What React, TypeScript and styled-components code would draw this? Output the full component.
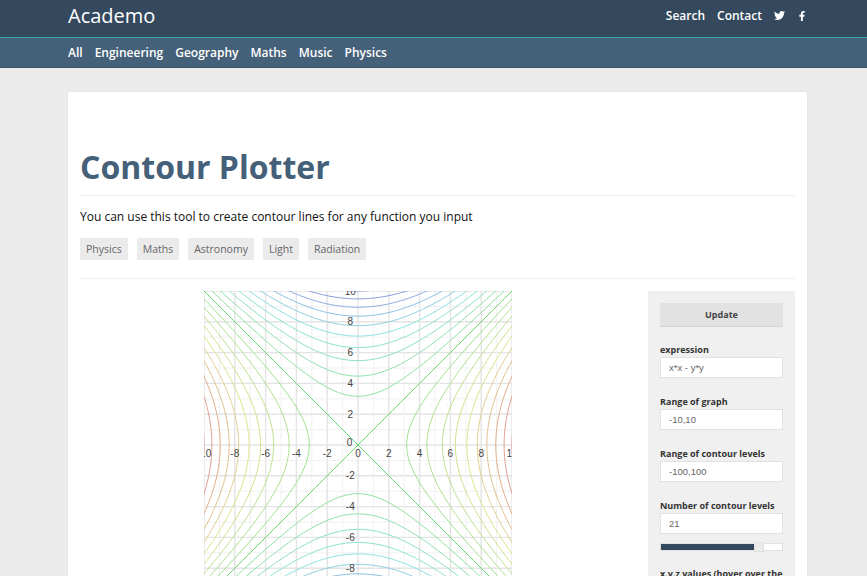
import styled, { createGlobalStyle } from "styled-components";
import { FaTwitter, FaFacebookF } from "react-icons/fa";

const GlobalStyle = createGlobalStyle`
  html, body {
    margin: 0;
    height: 100%;
    overflow: hidden;
    background: #ebebeb;
    font-family: "Open Sans", "Liberation Sans", sans-serif;
  }
`;

const TopBar = styled.header`
  height: 37px;
  background: #34495e;
  border-bottom: 1px solid #3aa6a0;
  display: flex;
  align-items: center;
  justify-content: space-between;
  padding: 0 60px 0 68px;
`;

const Logo = styled.div`
  color: #fff;
  font-size: 20px;
  line-height: 30px;
  margin-top: -6px;
`;

const TopLinks = styled.nav`
  display: flex;
  align-items: center;
  gap: 12px;
  margin-top: -6px;
  a {
    color: #fff;
    font-size: 12px;
    font-weight: 600;
  }
  svg {
    color: #fff;
    display: block;
  }
`;

const SubBar = styled.nav`
  height: 29px;
  background: #456079;
  border-bottom: 1px solid #3d5468;
  display: flex;
  align-items: center;
  gap: 12px;
  padding-left: 68px;
  a {
    color: #fff;
    font-size: 12px;
    font-weight: 600;
  }
`;

const Card = styled.main`
  margin: 24px 60px 0 68px;
  background: #fff;
  padding: 48px 12px 0;
  border-radius: 2px;
  box-shadow: 0 0 2px rgba(0, 0, 0, 0.08);
`;

const Title = styled.h1`
  margin: 0;
  color: #456079;
  font-size: 32px;
  font-weight: 700;
  line-height: 54px;
  padding-bottom: 1px;
  border-bottom: 1px solid #efefef;
`;

const Intro = styled.p`
  margin: 0;
  padding-top: 12px;
  color: #111;
  font-size: 12px;
  line-height: 18px;
`;

const Tags = styled.div`
  display: flex;
  gap: 9px;
  margin-top: 12px;
  padding-bottom: 18px;
  border-bottom: 1px solid #efefef;
`;

const Tag = styled.a`
  background: #ebebeb;
  color: #666;
  font-size: 10.5px;
  line-height: 22px;
  padding: 0 6px;
`;

const Columns = styled.section`
  display: grid;
  grid-template-columns: 1fr 147px;
  gap: 13px;
  margin-top: 12px;
`;

const PlotColumn = styled.div`
  display: flex;
  justify-content: center;
`;

const Plot = styled.svg`
  display: block;
  width: 308px;
  height: 308px;
  flex: none;
`;

const Side = styled.aside`
  background: #f0f0f0;
  padding: 12px;
  height: 400px;
`;

const UpdateButton = styled.button`
  display: block;
  width: 100%;
  height: 24px;
  background: #e2e2e2;
  border: 0;
  border-bottom: 1px solid #d6d6d6;
  color: #444;
  font-family: inherit;
  font-size: 9px;
  font-weight: 700;
  padding: 0;
  margin-bottom: 16px;
`;

const Field = styled.div`
  margin-bottom: 17px;
`;

const FieldLabel = styled.label`
  display: block;
  color: #333;
  font-size: 9px;
  font-weight: 700;
  line-height: 13px;
  margin-bottom: 1px;
`;

const FieldInput = styled.input`
  display: block;
  box-sizing: border-box;
  width: 100%;
  height: 21px;
  border: 1px solid #e2e2e2;
  background: #fff;
  color: #666;
  font-family: "Liberation Sans", sans-serif;
  font-size: 9.5px;
  padding: 0 8px;
  outline: none;
`;

const Slider = styled.div`
  position: relative;
  height: 8px;
  margin: 9px 0 16px;
  background: #fff;
  border: 1px solid #e2e2e2;
  box-sizing: border-box;
`;

const SliderFill = styled.div<{ $percent: number }>`
  height: 100%;
  width: ${(p) => p.$percent}%;
  background: #34495e;
`;

const SliderThumb = styled.div<{ $percent: number }>`
  position: absolute;
  top: -2px;
  left: ${(p) => p.$percent}%;
  width: 10px;
  height: 10px;
  background: #ececec;
  border: 1px solid #e0e0e0;
  box-sizing: border-box;
`;

const SIZE = 308;
const UNIT = SIZE / 20;
const toX = (x: number) => SIZE / 2 + x * UNIT;
const toY = (y: number) => SIZE / 2 - y * UNIT;

const range = (from: number, to: number, step: number) => {
  const out: number[] = [];
  for (let v = from; v <= to + 1e-6; v += step) out.push(v);
  return out;
};

const levelColor = (z: number) =>
  `hsl(${120 - (z / 100) * 120}, 60%, ${z === 0 ? 62 : 72}%)`;

// x*x - y*y = z, one path for each branch of the hyperbola
const branches = (z: number) => {
  const samples = range(-10, 10, 0.25);
  const line = (pts: number[][]) =>
    pts.map((p, i) => `${i ? "L" : "M"}${toX(p[0]).toFixed(2)} ${toY(p[1]).toFixed(2)}`).join("");
  if (z >= 0) {
    return [1, -1].map((s) => line(samples.map((y) => [s * Math.sqrt(z + y * y), y])));
  }
  return [1, -1].map((s) => line(samples.map((x) => [x, s * Math.sqrt(-z + x * x)])));
};

const ticks = range(-10, 10, 2);

const ContourPlot = () => (
  <Plot viewBox={`0 0 ${SIZE} ${SIZE}`}>
    {range(-10, 10, 1).map((v) => {
      const major = v % 2 === 0;
      const stroke = major ? "#e4e4e4" : "#f1f1f1";
      const width = major ? 1.4 : 1;
      return (
        <g key={v}>
          <line x1={toX(v)} x2={toX(v)} y1={0} y2={SIZE} stroke={stroke} strokeWidth={width} />
          <line x1={0} x2={SIZE} y1={toY(v)} y2={toY(v)} stroke={stroke} strokeWidth={width} />
        </g>
      );
    })}
    {range(-100, 100, 10).map((z) =>
      branches(z).map((d, i) => (
        <path key={`${z}-${i}`} d={d} fill="none" stroke={levelColor(z)} strokeWidth={1} />
      ))
    )}
    <g fontFamily="Liberation Sans, sans-serif" fontSize={10} fill="#444">
      {ticks.map((v) => (
        <text key={`x${v}`} x={toX(v)} y={SIZE / 2 + 12} textAnchor="middle">
          {v}
        </text>
      ))}
      {ticks
        .filter((v) => v !== 0)
        .map((v) => (
          <text key={`y${v}`} x={toX(-0.5)} y={toY(v) + 3.5} textAnchor="middle">
            {v}
          </text>
        ))}
      <text x={toX(-0.55)} y={toY(0) + 0.5} textAnchor="middle">
        0
      </text>
    </g>
  </Plot>
);

const fields = [
  { label: "expression", value: "x*x - y*y" },
  { label: "Range of graph", value: "-10,10" },
  { label: "Range of contour levels", value: "-100,100" },
];

const App = () => (
  <>
    <GlobalStyle />
    <TopBar>
      <Logo>Academo</Logo>
      <TopLinks>
        <a>Search</a>
        <a>Contact</a>
        <FaTwitter size={11} />
        <FaFacebookF size={10} />
      </TopLinks>
    </TopBar>
    <SubBar>
      <a>All</a>
      <a>Engineering</a>
      <a>Geography</a>
      <a>Maths</a>
      <a>Music</a>
      <a>Physics</a>
    </SubBar>
    <Card>
      <Title>Contour Plotter</Title>
      <Intro>You can use this tool to create contour lines for any function you input</Intro>
      <Tags>
        <Tag>Physics</Tag>
        <Tag>Maths</Tag>
        <Tag>Astronomy</Tag>
        <Tag>Light</Tag>
        <Tag>Radiation</Tag>
      </Tags>
      <Columns>
        <PlotColumn>
          <ContourPlot />
        </PlotColumn>
        <Side>
          <UpdateButton>Update</UpdateButton>
          {fields.map((f) => (
            <Field key={f.label}>
              <FieldLabel>{f.label}</FieldLabel>
              <FieldInput readOnly value={f.value} />
            </Field>
          ))}
          <FieldLabel>Number of contour levels</FieldLabel>
          <FieldInput readOnly value="21" />
          <Slider>
            <SliderFill $percent={77} />
            <SliderThumb $percent={77} />
          </Slider>
          <FieldLabel>x,y,z values (hover over the</FieldLabel>
        </Side>
      </Columns>
    </Card>
  </>
);

export default App;
